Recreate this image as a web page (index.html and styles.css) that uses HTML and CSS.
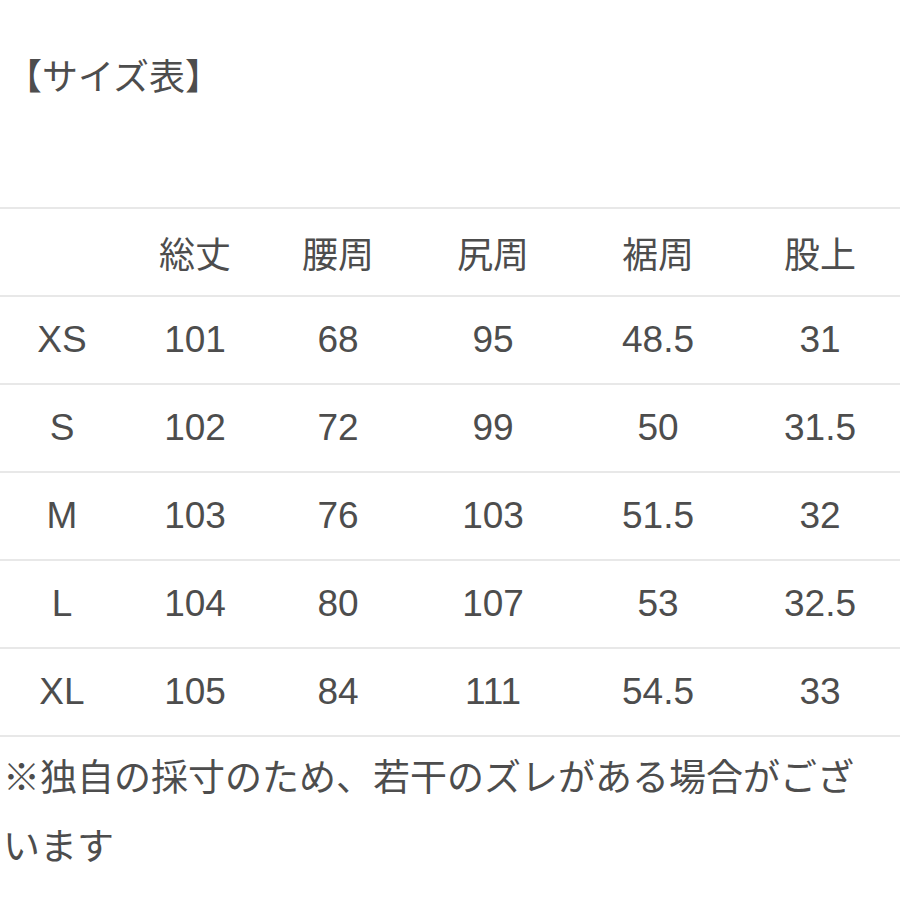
FILE: index.html
```html
<!DOCTYPE html>
<html lang="ja">
<head>
<meta charset="utf-8">
<link rel="stylesheet" href="styles.css">
</head>
<body>
<div class="page">
  <h1 class="title">【サイズ表】</h1>
  <table class="size-table">
    <colgroup>
      <col class="c1"><col class="c2"><col class="c3"><col class="c4"><col class="c5"><col class="c6">
    </colgroup>
    <thead>
      <tr><th></th><th>総丈</th><th>腰周</th><th>尻周</th><th>裾周</th><th>股上</th></tr>
    </thead>
    <tbody>
      <tr><td>XS</td><td>101</td><td>68</td><td>95</td><td>48.5</td><td>31</td></tr>
      <tr><td>S</td><td>102</td><td>72</td><td>99</td><td>50</td><td>31.5</td></tr>
      <tr><td>M</td><td>103</td><td>76</td><td>103</td><td>51.5</td><td>32</td></tr>
      <tr><td>L</td><td>104</td><td>80</td><td>107</td><td>53</td><td>32.5</td></tr>
      <tr><td>XL</td><td>105</td><td>84</td><td>111</td><td>54.5</td><td>33</td></tr>
    </tbody>
  </table>
  <p class="note">※独自の採寸のため、若干のズレがある場合がございます</p>
</div>
</body>
</html>
```
FILE: styles.css
```css
html, body {
  margin: 0;
  padding: 0;
  background: #ffffff;
}
.page {
  width: 900px;
  color: #4d4d4d;
  font-family: "Liberation Sans", "Noto Sans CJK JP", sans-serif;
}
.title {
  margin: 0;
  padding: 52px 0 0 6px;
  height: 207px;
  box-sizing: border-box;
  font-family: "Noto Sans CJK JP", sans-serif;
  font-weight: normal;
  font-size: 36px;
  line-height: 44px;
}
.size-table {
  width: 900px;
  border-collapse: collapse;
  table-layout: fixed;
}
.c1 { width: 124px; }
.c2 { width: 142px; }
.c3 { width: 144px; }
.c4 { width: 166px; }
.c5 { width: 164px; }
.c6 { width: 160px; }
.size-table th,
.size-table td {
  height: 86px;
  padding: 0;
  text-align: center;
  vertical-align: middle;
  border-top: 2px solid #e8e8e8;
  border-bottom: 2px solid #e8e8e8;
  font-weight: normal;
  font-size: 37px;
}
.size-table th {
  font-family: "Noto Sans CJK JP", sans-serif;
  font-size: 36px;
}
.note {
  margin: 0;
  width: 870px;
  padding: 4px 0 0 3px;
  font-family: "Noto Sans CJK JP", sans-serif;
  font-size: 37px;
  line-height: 69px;
}
```
